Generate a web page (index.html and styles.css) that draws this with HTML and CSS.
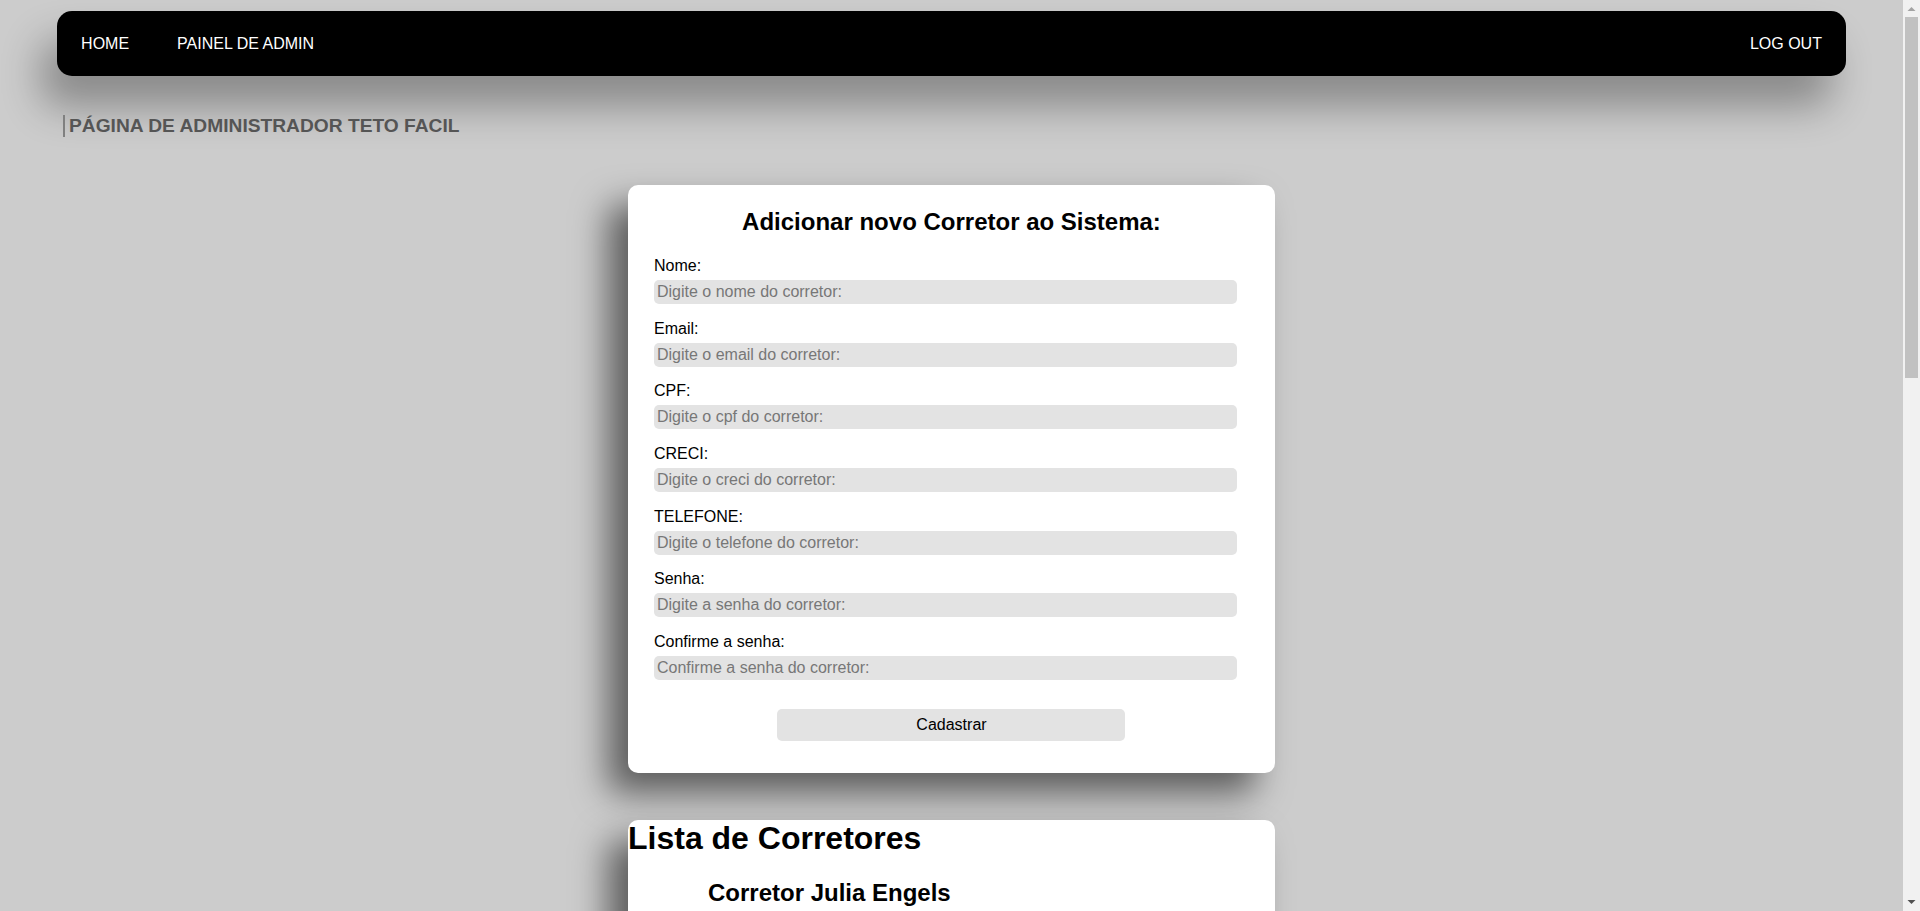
FILE: index.html
```html
<!DOCTYPE html>
<html lang="pt-BR">
<head>
<meta charset="utf-8">
<title>Painel de Admin - Teto Facil</title>
<link rel="stylesheet" href="styles.css">
</head>
<body>
<nav class="navbar">
  <div class="nav-left">
    <a href="#" class="nav-link">HOME</a>
    <a href="#" class="nav-link">PAINEL DE ADMIN</a>
  </div>
  <a href="#" class="nav-link">LOG OUT</a>
</nav>

<h3 class="page-title">PÁGINA DE ADMINISTRADOR TETO FACIL</h3>

<main class="content">
  <section class="card form-card">
    <h2 class="form-title">Adicionar novo Corretor ao Sistema:</h2>
    <form class="form">
      <div class="field">
        <label class="field-label" for="nome">Nome:</label>
        <input class="field-input" id="nome" type="text" placeholder="Digite o nome do corretor:">
      </div>
      <div class="field">
        <label class="field-label" for="email">Email:</label>
        <input class="field-input" id="email" type="text" placeholder="Digite o email do corretor:">
      </div>
      <div class="field">
        <label class="field-label" for="cpf">CPF:</label>
        <input class="field-input" id="cpf" type="text" placeholder="Digite o cpf do corretor:">
      </div>
      <div class="field">
        <label class="field-label" for="creci">CRECI:</label>
        <input class="field-input" id="creci" type="text" placeholder="Digite o creci do corretor:">
      </div>
      <div class="field">
        <label class="field-label" for="tel">TELEFONE:</label>
        <input class="field-input" id="tel" type="text" placeholder="Digite o telefone do corretor:">
      </div>
      <div class="field">
        <label class="field-label" for="senha">Senha:</label>
        <input class="field-input" id="senha" type="password" placeholder="Digite a senha do corretor:">
      </div>
      <div class="field">
        <label class="field-label" for="senha2">Confirme a senha:</label>
        <input class="field-input" id="senha2" type="password" placeholder="Confirme a senha do corretor:">
      </div>
      <button type="button" class="submit-btn">Cadastrar</button>
    </form>
  </section>

  <section class="card list-card">
    <h1 class="list-title">Lista de Corretores</h1>
    <ul class="broker-list">
      <li class="broker">
        <h2 class="broker-name">Corretor Julia Engels</h2>
        <p class="broker-info">Email: julia.engels@tetofacil.com</p>
        <p class="broker-info">CPF: 123.456.789-00</p>
        <p class="broker-info">CRECI: 12345-F</p>
        <p class="broker-info">Telefone: (11) 91234-5678</p>
        <div class="broker-actions"><button type="button" class="action-btn">Editar</button><button type="button" class="action-btn">Excluir</button></div>
      </li>
      <li class="broker">
        <h2 class="broker-name">Corretor Marcos Silva</h2>
        <p class="broker-info">Email: marcos.silva@tetofacil.com</p>
        <p class="broker-info">CPF: 987.654.321-00</p>
        <p class="broker-info">CRECI: 54321-F</p>
        <p class="broker-info">Telefone: (11) 98765-4321</p>
        <div class="broker-actions"><button type="button" class="action-btn">Editar</button><button type="button" class="action-btn">Excluir</button></div>
      </li>
      <li class="broker">
        <h2 class="broker-name">Corretor Ana Souza</h2>
        <p class="broker-info">Email: ana.souza@tetofacil.com</p>
        <p class="broker-info">CPF: 321.654.987-00</p>
        <p class="broker-info">CRECI: 67890-F</p>
        <p class="broker-info">Telefone: (11) 93456-7890</p>
        <div class="broker-actions"><button type="button" class="action-btn">Editar</button><button type="button" class="action-btn">Excluir</button></div>
      </li>
      <li class="broker">
        <h2 class="broker-name">Corretor Pedro Lima</h2>
        <p class="broker-info">Email: pedro.lima@tetofacil.com</p>
        <p class="broker-info">CPF: 456.789.123-00</p>
        <p class="broker-info">CRECI: 13579-F</p>
        <p class="broker-info">Telefone: (11) 92468-1357</p>
        <div class="broker-actions"><button type="button" class="action-btn">Editar</button><button type="button" class="action-btn">Excluir</button></div>
      </li>
      <li class="broker">
        <h2 class="broker-name">Corretor Carla Mendes</h2>
        <p class="broker-info">Email: carla.mendes@tetofacil.com</p>
        <p class="broker-info">CPF: 654.321.987-00</p>
        <p class="broker-info">CRECI: 24680-F</p>
        <p class="broker-info">Telefone: (11) 97531-8642</p>
        <div class="broker-actions"><button type="button" class="action-btn">Editar</button><button type="button" class="action-btn">Excluir</button></div>
      </li>
    </ul>
  </section>
</main>

<div class="scrollbar" aria-hidden="true">
  <div class="scroll-arrow">
    <svg width="17" height="17" viewBox="0 0 17 17"><polygon points="4.5,11 12.5,11 8.5,7" fill="#a3a3a3"/></svg>
  </div>
  <div class="scroll-track"><div class="scroll-thumb"></div></div>
  <div class="scroll-arrow">
    <svg width="17" height="17" viewBox="0 0 17 17"><polygon points="4.5,6 12.5,6 8.5,10" fill="#505050"/></svg>
  </div>
</div>
</body>
</html>
```

FILE: styles.css
```css
html, body {
  margin: 0;
  padding: 0;
}

body {
  background: #cccccc;
  font-family: "Liberation Sans", Arial, sans-serif;
  margin-right: 17px;
  padding-top: 11px;
  padding-bottom: 60px;
}

.navbar {
  width: 94%;
  margin: 0 auto;
  height: 65px;
  background: #000;
  border-radius: 15px;
  display: flex;
  align-items: center;
  justify-content: space-between;
  box-shadow: -15px 30px 40px rgba(0, 0, 0, 0.33);
}

.nav-left {
  display: flex;
  align-items: center;
}

.nav-link {
  color: #fff;
  text-decoration: none;
  font-size: 16px;
  padding: 0 24px;
}

.page-title {
  margin: 39px 0 0 63px;
  padding-left: 4px;
  border-left: 2px solid #808080;
  font-size: 19.2px;
  font-weight: bold;
  color: #555555;
  line-height: normal;
}

.content {
  display: flex;
  flex-direction: column;
  align-items: center;
}

.card {
  width: 34%;
  background: #fff;
  border-radius: 10px;
  box-sizing: border-box;
  box-shadow: -20px 20px 35px rgba(0, 0, 0, 0.55);
}

.form-card {
  margin-top: 48px;
  padding: 23px 26px 32px;
}

.form-title {
  margin: 0;
  text-align: center;
  font-size: 24px;
  line-height: normal;
  color: #000;
}

.form {
  margin-top: 21px;
}

.field {
  margin-bottom: 15.7px;
}

.field-label {
  display: block;
  font-size: 16px;
  line-height: normal;
  color: #000;
}

.field-input {
  display: block;
  width: 98%;
  height: 24px;
  margin-top: 5px;
  padding: 0 3px;
  box-sizing: border-box;
  border: none;
  border-radius: 5px;
  background: #e3e3e3;
  font-family: "Liberation Sans", Arial, sans-serif;
  font-size: 16px;
  color: #000;
  outline: none;
}

.field-input::placeholder {
  color: #777777;
}

.submit-btn {
  display: block;
  width: 348px;
  height: 32px;
  margin: 29px auto 0;
  border: none;
  border-radius: 5px;
  background: #e3e3e3;
  font-family: "Liberation Sans", Arial, sans-serif;
  font-size: 16px;
  color: #000;
}

.list-card {
  margin-top: 47px;
  padding: 0 0 30px;
}

.list-title {
  margin: 0 0 21.44px;
  font-size: 32px;
  line-height: normal;
  color: #000;
}

.broker-list {
  list-style: none;
  margin: 0;
  padding: 0 0 0 80px;
}

.broker {
  margin-bottom: 40px;
}

.broker-name {
  margin: 0 0 12px;
  font-size: 24px;
  line-height: normal;
  color: #000;
}

.broker-info {
  margin: 0 0 8px;
  font-size: 16px;
  color: #000;
}

.broker-actions {
  display: flex;
  gap: 10px;
  margin-top: 12px;
}

.action-btn {
  width: 100px;
  height: 30px;
  border: none;
  border-radius: 5px;
  background: #e3e3e3;
  font-family: "Liberation Sans", Arial, sans-serif;
  font-size: 15px;
}

.scrollbar {
  position: fixed;
  top: 0;
  right: 0;
  width: 17px;
  height: 100vh;
  background: #f1f1f1;
  display: flex;
  flex-direction: column;
}

.scroll-arrow {
  height: 17px;
  flex: 0 0 17px;
}

.scroll-arrow svg {
  display: block;
}

.scroll-track {
  flex: 1;
  padding: 0 2px;
}

.scroll-thumb {
  height: 361px;
  background: #c1c1c1;
}
```
